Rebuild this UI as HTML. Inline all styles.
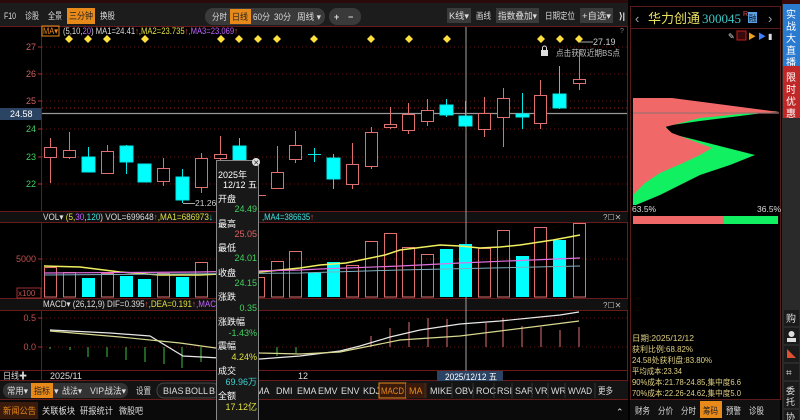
<!DOCTYPE html>
<html><head><meta charset="utf-8"><style>
html,body{margin:0;padding:0;background:#000;width:800px;height:420px;overflow:hidden}
svg{display:block;font-family:"Liberation Sans","Noto Sans CJK SC",sans-serif}
</style></head><body>
<svg width="800" height="420" viewBox="0 0 800 420" xmlns="http://www.w3.org/2000/svg">
<defs>
<g id="dia"><polygon points="0,-4 4,0 0,4 -4,0" fill="#ffe040"/></g>
</defs>
<rect width="800" height="420" fill="#000"/>
<!-- top toolbar -->
<rect x="0" y="0" width="630" height="26" fill="#1c1c1c"/>
<rect x="0" y="0" width="800" height="3" fill="#2a0a0a"/>
<g font-size="9" fill="#ddd" lengthAdjust="spacingAndGlyphs">
<text x="4" y="19" textLength="12" lengthAdjust="spacingAndGlyphs">F10</text>
<text x="25" y="19" textLength="14" lengthAdjust="spacingAndGlyphs">诊股</text>
<text x="48" y="19" textLength="14" lengthAdjust="spacingAndGlyphs">全景</text>
<rect x="67" y="8" width="28" height="16" fill="#e88a1a"/><text x="69" y="19" fill="#222" textLength="24" lengthAdjust="spacingAndGlyphs">三分钟</text>
<text x="100" y="19" textLength="15" lengthAdjust="spacingAndGlyphs">换股</text>
<rect x="205" y="8" width="120" height="17" rx="8" fill="#3a3a3a"/>
<text x="212" y="20" textLength="15" lengthAdjust="spacingAndGlyphs">分时</text>
<rect x="230" y="9" width="21" height="15" fill="#e88a1a"/><text x="232" y="20" fill="#222" textLength="16" lengthAdjust="spacingAndGlyphs">日线</text>
<text x="253" y="20" textLength="17" lengthAdjust="spacingAndGlyphs">60分</text>
<text x="274" y="20" textLength="17" lengthAdjust="spacingAndGlyphs">30分</text>
<text x="297" y="20" textLength="24" lengthAdjust="spacingAndGlyphs">周线 ▾</text>
<rect x="329" y="8" width="32" height="17" rx="8" fill="#3a3a3a"/>
<text x="334" y="20" font-weight="bold">+</text><text x="348" y="20" font-weight="bold">−</text>
<rect x="447" y="8" width="24" height="15" fill="#3a3a3a"/><text x="449" y="19" textLength="20" lengthAdjust="spacingAndGlyphs">K线▾</text>
<text x="476" y="19" textLength="15" lengthAdjust="spacingAndGlyphs">画线</text>
<rect x="496" y="8" width="43" height="15" fill="#3a3a3a"/><text x="498" y="19" textLength="39" lengthAdjust="spacingAndGlyphs">指数叠加▾</text>
<text x="545" y="19" textLength="30" lengthAdjust="spacingAndGlyphs">日期定位</text>
<rect x="580" y="8" width="33" height="15" fill="#3a3a3a"/><text x="582" y="19" textLength="29" lengthAdjust="spacingAndGlyphs">+自选▾</text>
<text x="619" y="19" font-weight="bold">⟩|</text>
</g>
<text x="620" y="33" font-size="7" fill="#888">?</text>
<!-- frame lines -->
<g stroke="#6a1a1a" stroke-width="1" fill="none">
<line x1="0" y1="26.5" x2="630" y2="26.5"/>
<line x1="41.5" y1="26" x2="41.5" y2="380"/>
<line x1="627.5" y1="26" x2="627.5" y2="420"/>
<line x1="0" y1="211.5" x2="628" y2="211.5"/><line x1="0" y1="222.5" x2="628" y2="222.5"/>
<line x1="0" y1="298.5" x2="628" y2="298.5"/><line x1="0" y1="310.5" x2="628" y2="310.5"/>
<line x1="0" y1="370.5" x2="628" y2="370.5"/><line x1="0" y1="380.5" x2="628" y2="380.5"/>
<line x1="0" y1="399.5" x2="628" y2="399.5"/>
</g>
<rect x="0" y="212" width="628" height="10" fill="#111"/>
<rect x="0" y="299" width="628" height="11" fill="#111"/>
<!-- MA legend -->
<rect x="42" y="26" width="17" height="10" fill="none" stroke="#e88a1a"/>
<g font-size="9">
<text x="43" y="34" fill="#e88a1a" textLength="15" lengthAdjust="spacingAndGlyphs">MA▾</text>
<text x="63" y="34" fill="#ddd" textLength="175" lengthAdjust="spacingAndGlyphs">(5,10,<tspan fill="#c060ff">20</tspan>) MA1=24.41<tspan fill="#e05050">↑</tspan><tspan fill="#e0e040">,MA2=23.735</tspan><tspan fill="#e05050">↑</tspan><tspan fill="#c060ff">,MA3=23.069</tspan><tspan fill="#e05050">↑</tspan></text>
</g>
<!-- grid -->
<g stroke="#5a1212" stroke-dasharray="1,3">
<line x1="42" y1="47" x2="627" y2="47"/><line x1="42" y1="74" x2="627" y2="74"/><line x1="42" y1="101" x2="627" y2="101"/>
<line x1="42" y1="129" x2="627" y2="129"/><line x1="42" y1="157" x2="627" y2="157"/><line x1="42" y1="184" x2="627" y2="184"/>
<line x1="42" y1="108" x2="627" y2="108" stroke="#a02020"/>
<line x1="42" y1="259" x2="627" y2="259"/><line x1="42" y1="318" x2="627" y2="318"/><line x1="42" y1="347" x2="627" y2="347"/>
</g>
<!-- axis labels -->
<g font-size="9" text-anchor="end">
<text x="36" y="50" fill="#d06060">27</text><text x="36" y="77" fill="#d06060">26</text><text x="36" y="104" fill="#d06060">25</text>
<text x="36" y="132" fill="#40d060">24</text><text x="36" y="160" fill="#40d060">23</text><text x="36" y="187" fill="#40d060">22</text>
<text x="36" y="262" fill="#c05050">5000</text>
<text x="36" y="321" fill="#c05050">0.5</text><text x="36" y="350" fill="#c05050">0.0</text>
</g>
<g stroke="#a03030"><line x1="38" y1="47" x2="42" y2="47"/><line x1="38" y1="74" x2="42" y2="74"/><line x1="38" y1="101" x2="42" y2="101"/><line x1="38" y1="129" x2="42" y2="129"/><line x1="38" y1="157" x2="42" y2="157"/><line x1="38" y1="184" x2="42" y2="184"/><line x1="38" y1="259" x2="42" y2="259"/><line x1="38" y1="318" x2="42" y2="318"/><line x1="38" y1="347" x2="42" y2="347"/></g>
<rect x="0" y="108" width="41" height="12" fill="#2c4464"/>
<text x="10" y="117" font-size="9" fill="#fff">24.58</text>
<rect x="17" y="288" width="24" height="10" fill="none" stroke="#a03030"/>
<text x="18" y="296" font-size="8" fill="#c05050">x100</text>
<!-- price line & crosshair -->
<line x1="42" y1="113.5" x2="627" y2="113.5" stroke="#999" stroke-width="1.2"/>
<line x1="466" y1="27" x2="466" y2="380" stroke="#888" stroke-width="1.2"/>
<!-- diamonds -->
<g>
<use href="#dia" x="69" y="39"/><use href="#dia" x="88" y="39"/><use href="#dia" x="107" y="39"/><use href="#dia" x="145" y="39"/>
<use href="#dia" x="221" y="39"/><use href="#dia" x="239" y="39"/><use href="#dia" x="258" y="39"/><use href="#dia" x="277" y="39"/><use href="#dia" x="314" y="39"/>
<use href="#dia" x="371" y="39"/><use href="#dia" x="409" y="39"/><use href="#dia" x="447" y="39"/><use href="#dia" x="541" y="39"/><use href="#dia" x="560" y="39"/><use href="#dia" x="579" y="39"/>
</g>
<line x1="580" y1="42" x2="593" y2="42" stroke="#aaa"/>
<text x="593" y="45" font-size="9" fill="#ccc">27.19</text>
<rect x="541" y="50" width="7" height="6" fill="#ddd"/><path d="M542.5 50 v-2 a2 2 0 0 1 4 0 v2" fill="none" stroke="#ddd"/>
<text x="556" y="56" font-size="8.5" fill="#bbb" textLength="64" lengthAdjust="spacingAndGlyphs">点击获取近期BS点</text>
<!-- candles -->
<g stroke-width="1">
<g stroke="#e07070" fill="#000">
<line x1="50.5" y1="138" x2="50.5" y2="183"/><rect x="44.5" y="147.5" width="12" height="10"/>
<line x1="69.5" y1="132" x2="69.5" y2="159"/><rect x="63.5" y="150.5" width="12" height="7"/>
<line x1="107.5" y1="145" x2="107.5" y2="173"/><rect x="101.5" y="151.5" width="12" height="22"/>
<line x1="163.5" y1="158" x2="163.5" y2="186"/><rect x="157.5" y="168.5" width="12" height="13"/>
<line x1="201.5" y1="153" x2="201.5" y2="193"/><rect x="195.5" y="158.5" width="12" height="29"/>
<line x1="220.5" y1="136" x2="220.5" y2="160"/><rect x="214.5" y="154.5" width="12" height="4"/>
<line x1="252" y1="195.5" x2="266" y2="195.5"/>
<line x1="277.5" y1="146" x2="277.5" y2="188"/><rect x="271.5" y="172.5" width="12" height="16"/>
<line x1="295.5" y1="131" x2="295.5" y2="163"/><rect x="289.5" y="145.5" width="12" height="14"/>
<line x1="352.5" y1="143" x2="352.5" y2="189"/><rect x="346.5" y="164.5" width="12" height="20"/>
<line x1="371.5" y1="127" x2="371.5" y2="169"/><rect x="365.5" y="132.5" width="12" height="34"/>
<line x1="390.5" y1="107" x2="390.5" y2="129"/><rect x="384.5" y="124.5" width="12" height="3"/>
<line x1="408.5" y1="103" x2="408.5" y2="134"/><rect x="402.5" y="114.5" width="12" height="16"/>
<line x1="427.5" y1="99" x2="427.5" y2="126"/><rect x="421.5" y="110.5" width="12" height="11"/>
<line x1="484.5" y1="97" x2="484.5" y2="137"/><rect x="478.5" y="113.5" width="12" height="16"/>
<line x1="503.5" y1="88" x2="503.5" y2="147"/><rect x="497.5" y="98.5" width="12" height="19"/>
<line x1="540.5" y1="80" x2="540.5" y2="129"/><rect x="534.5" y="95.5" width="12" height="28"/>
<line x1="579.5" y1="50" x2="579.5" y2="90"/><rect x="573.5" y="79.5" width="12" height="4"/>
</g>
<g stroke="#00e8e8" fill="#00ffff">
<line x1="88.5" y1="147" x2="88.5" y2="172"/><rect x="82" y="157" width="13" height="15"/>
<line x1="126.5" y1="145" x2="126.5" y2="174"/><rect x="120" y="146" width="13" height="16"/>
<rect x="138" y="164" width="13" height="18"/>
<line x1="182.5" y1="169" x2="182.5" y2="203"/><rect x="176" y="177" width="13" height="23"/>
<line x1="239.5" y1="138" x2="239.5" y2="170"/><rect x="233" y="146" width="13" height="15"/>
<line x1="314.5" y1="148" x2="314.5" y2="162"/><line x1="308" y1="154.5" x2="321" y2="154.5"/>
<line x1="333.5" y1="154" x2="333.5" y2="189"/><rect x="327" y="158" width="13" height="21"/>
<line x1="446.5" y1="99" x2="446.5" y2="117"/><rect x="440" y="105" width="13" height="10"/>
<line x1="465.5" y1="101" x2="465.5" y2="127"/><rect x="459" y="116" width="13" height="10"/>
<line x1="522.5" y1="93" x2="522.5" y2="129"/><rect x="516" y="114" width="13" height="3"/>
<line x1="559.5" y1="66" x2="559.5" y2="109"/><rect x="553" y="94" width="13" height="14"/>
</g>
</g>
<line x1="183" y1="203.5" x2="195" y2="203.5" stroke="#aaa"/>
<text x="195" y="206" font-size="8.5" fill="#ccc">21.26</text>
<!-- VOL header -->
<g font-size="9">
<text x="43" y="220" fill="#ddd" textLength="170" lengthAdjust="spacingAndGlyphs">VOL▾ <tspan fill="#e0e040">(5,</tspan><tspan fill="#c060ff">30</tspan><tspan fill="#ddd">,</tspan><tspan fill="#40e0e0">120</tspan><tspan fill="#ddd">) VOL=699648</tspan><tspan fill="#e05050">↑</tspan><tspan fill="#e0e040">,MA1=686973</tspan><tspan fill="#40e0e0">↓</tspan></text>
<text x="262" y="220" fill="#40e0e0" textLength="52" lengthAdjust="spacingAndGlyphs">,MA4=386635<tspan fill="#e05050">↑</tspan></text>
<text x="43" y="307" fill="#ddd" textLength="173" lengthAdjust="spacingAndGlyphs">MACD▾ (26,12,9) DIF=0.395<tspan fill="#e05050">↑</tspan><tspan fill="#e0e040">,DEA=0.191</tspan><tspan fill="#e05050">↑</tspan><tspan fill="#c060ff">,MAC</tspan></text>
<text x="603" y="220" fill="#bbb" font-size="8">?☐✕</text>
<text x="603" y="308" fill="#bbb" font-size="8">?☐✕</text>
</g>
<!-- volume bars -->
<g stroke="#e07070" fill="none">
<rect x="44.5" y="267.5" width="12" height="29.5"/><rect x="63.5" y="272.5" width="12" height="24.5"/><rect x="101.5" y="273.5" width="12" height="23.5"/>
<rect x="157.5" y="273.5" width="12" height="23.5"/><rect x="195.5" y="262.5" width="12" height="34.5"/><rect x="252.5" y="277.5" width="12" height="19.5"/>
<rect x="271.5" y="261.5" width="12" height="35.5"/><rect x="289.5" y="251.5" width="12" height="45.5"/>
<rect x="346.5" y="265.5" width="12" height="31.5"/><rect x="365.5" y="241.5" width="12" height="55.5"/><rect x="384.5" y="233.5" width="12" height="63.5"/>
<rect x="402.5" y="247.5" width="12" height="49.5"/><rect x="421.5" y="254.5" width="12" height="42.5"/><rect x="478.5" y="248.5" width="12" height="48.5"/>
<rect x="497.5" y="230.5" width="12" height="66.5"/><rect x="534.5" y="227.5" width="12" height="69.5"/><rect x="573.5" y="223.5" width="12" height="73.5"/>
</g>
<g fill="#00ffff">
<rect x="82" y="278" width="13" height="19"/><rect x="120" y="276" width="13" height="21"/><rect x="138" y="279" width="13" height="18"/>
<rect x="176" y="277" width="13" height="20"/><rect x="308" y="273" width="13" height="24"/><rect x="327" y="262" width="13" height="35"/>
<rect x="440" y="249" width="13" height="48"/><rect x="459" y="244" width="13" height="53"/><rect x="516" y="256" width="13" height="41"/><rect x="553" y="240" width="13" height="57"/>
</g>
<polyline points="44,266 80,267 120,272 160,275 200,275 260,272 300,268 320,265 346,263 385,255 400,250 440,245 460,246 480,248 500,247 520,245 553,240 580,235" fill="none" stroke="#f0f060" stroke-width="1.5"/>
<polyline points="44,273 200,272 300,270 320,269 400,266 460,263 580,258" fill="none" stroke="#e070e0" stroke-width="1.2"/>
<polyline points="44,275 300,273 400,270 580,266" fill="none" stroke="#80b0c0" stroke-width="1"/>
<!-- MACD -->
<g stroke="#40c040">
<line x1="50" y1="347" x2="50" y2="349"/><line x1="70" y1="347" x2="70" y2="350"/><line x1="88" y1="347" x2="88" y2="357"/><line x1="107" y1="347" x2="107" y2="357"/>
<line x1="126" y1="347" x2="126" y2="360"/><line x1="145" y1="347" x2="145" y2="362"/><line x1="164" y1="347" x2="164" y2="364"/><line x1="182" y1="347" x2="182" y2="368"/>
<line x1="201" y1="347" x2="201" y2="362"/><line x1="277" y1="347" x2="277" y2="356"/><line x1="296" y1="347" x2="296" y2="353"/>
</g>
<g stroke="#e07070">
<line x1="371" y1="347" x2="371" y2="336"/><line x1="390" y1="347" x2="390" y2="328"/><line x1="409" y1="347" x2="409" y2="322"/><line x1="428" y1="347" x2="428" y2="318"/>
<line x1="447" y1="347" x2="447" y2="319"/><line x1="486" y1="347" x2="486" y2="323"/><line x1="503" y1="347" x2="503" y2="318"/><line x1="522" y1="347" x2="522" y2="326"/>
<line x1="541" y1="347" x2="541" y2="327"/><line x1="560" y1="347" x2="560" y2="330"/><line x1="579" y1="347" x2="579" y2="327"/>
</g>
<polyline points="50,330 110,333 150,336 183,356 220,358 260,359 300,356 340,351 360,346 390,337 420,330 460,324 500,321 540,317 560,315 579,312" fill="none" stroke="#e8e8e8" stroke-width="1.2"/>
<polyline points="50,331 120,337 180,343 230,350 260,353 300,354 340,352 370,346 400,340 460,336 500,331 540,326 579,321" fill="none" stroke="#d8d890" stroke-width="1.2"/>
<!-- date row -->
<g font-size="9" fill="#ddd">
<text x="3" y="379" textLength="24" lengthAdjust="spacingAndGlyphs">日线✚</text><text x="50" y="379">2025/11</text><text x="298" y="379">12</text>
</g>
<rect x="437" y="371" width="66" height="12" fill="#2c4464"/>
<text x="445" y="380" font-size="9" fill="#fff" textLength="52" lengthAdjust="spacingAndGlyphs">2025/12/12 五</text>
<!-- indicator row -->
<rect x="0" y="381" width="628" height="18" fill="#141414"/>
<rect x="3" y="383" width="125" height="15" rx="7" fill="#333"/>
<g font-size="9" fill="#ddd">
<text x="7" y="394" textLength="21" lengthAdjust="spacingAndGlyphs">常用▾</text>
<rect x="31" y="383" width="22" height="15" fill="#e88a1a"/><text x="34" y="394" fill="#222" textLength="16" lengthAdjust="spacingAndGlyphs">指标</text>
<text x="54" y="394">▾</text>
<text x="62" y="394" textLength="20" lengthAdjust="spacingAndGlyphs">战法▾</text>
<text x="90" y="394" textLength="36" lengthAdjust="spacingAndGlyphs">VIP战法▾</text>
<text x="136" y="394" textLength="15" lengthAdjust="spacingAndGlyphs">设置</text>
</g>
<rect x="157" y="383" width="62" height="15" rx="7" fill="#1a1a1a" stroke="#444"/>
<g font-size="9" fill="#ddd">
<text x="163" y="394">BIAS</text><text x="185" y="394">BOLL</text><text x="209" y="394">B</text>
<text x="256" y="394">MA</text><text x="276" y="394">DMI</text><text x="297" y="394">EMA</text><text x="318" y="394">EMV</text><text x="341" y="394">ENV</text><text x="363" y="394">KDJ</text>
<rect x="379" y="383" width="27" height="15" fill="#3a1a0a" stroke="#e88a1a"/><text x="381" y="394" fill="#e88a1a" textLength="23" lengthAdjust="spacingAndGlyphs">MACD</text>
<rect x="406" y="383" width="21" height="15" fill="#3a1a0a"/><text x="409" y="394" fill="#e88a1a">MA</text>
<text x="430" y="394">MIKE</text><text x="455" y="394">OBV</text><text x="476" y="394">ROC</text><text x="497" y="394">RSI</text><text x="515" y="394">SAR</text><text x="535" y="394">VR</text><text x="551" y="394">WR</text><text x="568" y="394" textLength="24" lengthAdjust="spacingAndGlyphs">WVAD</text><text x="598" y="394" textLength="15" lengthAdjust="spacingAndGlyphs">更多</text>
</g>
<g stroke="#333"><line x1="425" y1="383" x2="425" y2="398"/><line x1="452" y1="383" x2="452" y2="398"/><line x1="473" y1="383" x2="473" y2="398"/><line x1="494" y1="383" x2="494" y2="398"/><line x1="512" y1="383" x2="512" y2="398"/><line x1="532" y1="383" x2="532" y2="398"/><line x1="548" y1="383" x2="548" y2="398"/><line x1="565" y1="383" x2="565" y2="398"/><line x1="595" y1="383" x2="595" y2="398"/></g>
<!-- news row -->
<rect x="0" y="400" width="628" height="20" fill="#0a0a0a"/>
<rect x="0" y="402" width="38" height="17" fill="#3a1a0a"/>
<g font-size="9"><text x="3" y="414" fill="#e88a1a" textLength="33" lengthAdjust="spacingAndGlyphs">新闻公告</text><text x="42" y="414" fill="#ddd" textLength="33" lengthAdjust="spacingAndGlyphs">关联板块</text><text x="80" y="414" fill="#ddd" textLength="33" lengthAdjust="spacingAndGlyphs">研报统计</text><text x="119" y="414" fill="#ddd" textLength="24" lengthAdjust="spacingAndGlyphs">微股吧</text></g>
<text x="616" y="415" font-size="9" fill="#ddd">⌃</text>
<!-- tooltip -->
<rect x="216.5" y="160.5" width="42" height="262" fill="#181818" stroke="#888"/>
<circle cx="256" cy="162" r="4" fill="#ddd"/><text x="253.3" y="164.8" font-size="7" fill="#222">✕</text>
<g font-size="9">
<text x="218" y="178" fill="#fff">2025年</text><text x="257" y="188" fill="#fff" text-anchor="end">12/12 五</text>
<text x="218" y="202" fill="#fff">开盘</text><text x="257" y="212" fill="#40d060" text-anchor="end">24.49</text>
<text x="218" y="227" fill="#fff">最高</text><text x="257" y="237" fill="#e06060" text-anchor="end">25.05</text>
<text x="218" y="251" fill="#fff">最低</text><text x="257" y="261" fill="#40d060" text-anchor="end">24.01</text>
<text x="218" y="276" fill="#fff">收盘</text><text x="257" y="286" fill="#40d060" text-anchor="end">24.15</text>
<text x="218" y="300" fill="#fff">涨跌</text><text x="257" y="311" fill="#40d060" text-anchor="end">0.35</text>
<text x="218" y="325" fill="#fff">涨跌幅</text><text x="257" y="336" fill="#40d060" text-anchor="end">-1.43%</text>
<text x="218" y="349" fill="#fff">震幅</text><text x="257" y="360" fill="#e0e040" text-anchor="end">4.24%</text>
<text x="218" y="374" fill="#fff">成交</text><text x="257" y="385" fill="#40d0d0" text-anchor="end">69.96万</text>
<text x="218" y="399" fill="#fff">全额</text><text x="257" y="410" fill="#e0e040" text-anchor="end">17.12亿</text>
</g>
<!-- right panel -->
<rect x="628" y="0" width="154" height="420" fill="#000"/>
<rect x="630.5" y="6.5" width="150" height="22" fill="none" stroke="#5a1a1a"/>
<rect x="630.5" y="28.5" width="150" height="371" fill="none" stroke="#5a1a1a"/>
<text x="635" y="23" font-size="13" fill="#aaa">‹</text>
<text x="648" y="23" font-size="13" fill="#e8e060" textLength="52" lengthAdjust="spacingAndGlyphs">华力创通</text>
<text x="702" y="23" font-size="13" fill="#40c8c8" font-family="Liberation Serif,serif" textLength="39" lengthAdjust="spacingAndGlyphs">300045</text>
<text x="743" y="16" font-size="7" fill="#e05050">R</text>
<rect x="748" y="12" width="9" height="11" fill="#5aa0e0"/><text x="748.5" y="21" font-size="8" fill="#123">融</text>
<text x="768" y="23" font-size="13" fill="#aaa">›</text>
<g font-size="8"><text x="728" y="39" fill="#ddd">✎</text><rect x="737" y="31" width="9" height="9" fill="#3a0a0a" stroke="#c02020"/><text x="748" y="39" fill="#f0a020">▶</text><text x="758" y="39" fill="#4080ff">▶</text><text x="768" y="39" fill="#ddd">▮</text></g>
<!-- chips -->
<polygon points="779,111 740,116 700,121 665,126 672,134 700,141 755,155 730,165 700,175 660,195 636,205 633,205 633,120" fill="#10f060"/>
<polygon points="633,98 672,98 779,112 740,114 700,118 665,127 672,133 712,148 700,155 683,163 660,173 645,183 633,195" fill="#f06868"/>
<line x1="633" y1="113" x2="779" y2="113" stroke="#a07070" stroke-width="1.2"/>
<text x="632" y="212" font-size="8.5" fill="#ddd">63.5%</text><text x="757" y="212" font-size="8.5" fill="#ddd">36.5%</text>
<rect x="633" y="216" width="91" height="8" fill="#f06868"/><rect x="724" y="216" width="54" height="8" fill="#10f060"/>
<g font-size="8" fill="#e0d080">
<text x="632" y="341" textLength="62" lengthAdjust="spacingAndGlyphs">日期:2025/12/12</text>
<text x="632" y="352" textLength="61" lengthAdjust="spacingAndGlyphs">获利比例:68.82%</text>
<text x="632" y="363" textLength="80" lengthAdjust="spacingAndGlyphs">24.58处获利盘:83.80%</text>
<text x="632" y="374" textLength="50" lengthAdjust="spacingAndGlyphs">平均成本:23.34</text>
<text x="632" y="385" textLength="109" lengthAdjust="spacingAndGlyphs">90%成本:21.78-24.85,集中度6.6</text>
<text x="632" y="396" textLength="109" lengthAdjust="spacingAndGlyphs">70%成本:22.26-24.62,集中度5.0</text>
</g>
<rect x="630" y="400" width="150" height="20" fill="#111"/>
<rect x="700" y="401" width="22" height="17" fill="#e88a1a"/>
<g font-size="9" fill="#ddd"><text x="635" y="414" textLength="15" lengthAdjust="spacingAndGlyphs">财务</text><text x="658" y="414" textLength="15" lengthAdjust="spacingAndGlyphs">分价</text><text x="681" y="414" textLength="15" lengthAdjust="spacingAndGlyphs">分时</text><text x="703" y="414" fill="#222" textLength="15" lengthAdjust="spacingAndGlyphs">筹码</text><text x="726" y="414" textLength="15" lengthAdjust="spacingAndGlyphs">预警</text><text x="749" y="414" textLength="15" lengthAdjust="spacingAndGlyphs">诊股</text></g>
<!-- far right column -->
<rect x="782" y="0" width="18" height="420" fill="#2a2a2a"/>
<rect x="782" y="0" width="18" height="4" fill="#3a0a0a"/>
<rect x="783" y="4" width="17" height="62" fill="#2a7ad0"/>
<g font-size="10" fill="#fff"><text x="786" y="18">实</text><text x="786" y="30">战</text><text x="786" y="42">大</text><text x="786" y="54">直</text><text x="786" y="66">播</text></g>
<rect x="783" y="66" width="17" height="52" fill="#c02828"/>
<g font-size="10" fill="#fff"><text x="786" y="81">限</text><text x="786" y="93">时</text><text x="786" y="105">优</text><text x="786" y="117">惠</text></g>
<g fill="#ddd" font-size="10">
<rect x="784" y="310" width="15" height="16" fill="#1a1a1a"/><text x="786" y="322">购</text>
<rect x="784" y="328" width="15" height="16" fill="#1a1a1a"/><circle cx="791.5" cy="334" r="3"/><rect x="787" y="338" width="9" height="4"/>
<rect x="784" y="346" width="15" height="16" fill="#1a1a1a"/><polygon points="787,349 796,358 787,358" fill="#e05030"/>
<rect x="784" y="364" width="15" height="16" fill="#1a1a1a"/><text x="786" y="376">⌗</text>
<rect x="784" y="382" width="15" height="26" fill="#1a1a1a"/><text x="786" y="394" font-size="9">委</text><text x="786" y="405" font-size="9">托</text>
<rect x="784" y="410" width="15" height="10" fill="#1a1a1a"/><text x="786" y="420" font-size="9">协</text>
</g>
</svg>
</body></html>
